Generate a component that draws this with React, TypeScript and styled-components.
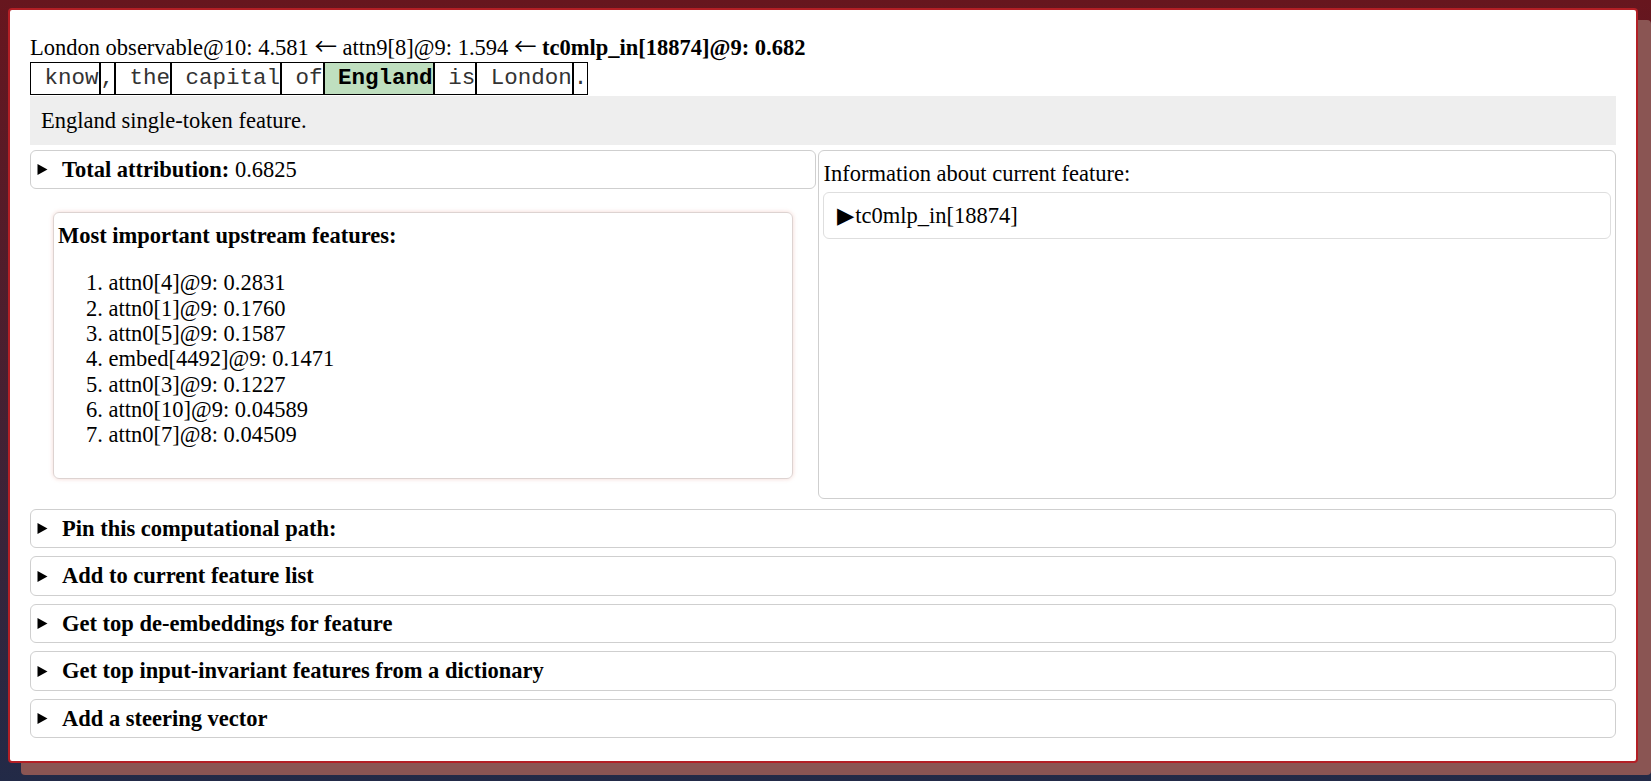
import React from "react";
import styled, { createGlobalStyle } from "styled-components";

const GlobalStyle = createGlobalStyle`
  html, body { margin: 0; padding: 0; }
  html {
    min-height: 100%;
    background: linear-gradient(180deg, #67161e 0%, #4a1f2f 45%, #222a47 100%);
  }
  body {
    min-height: 100vh;
    font-family: "Liberation Serif", "Times New Roman", serif;
    font-size: 22.5px;
    line-height: 25.3px;
    color: #000;
  }
`;

const Page = styled.div`
  padding: 8px 13px 18px 8px;
`;

const Card = styled.main`
  background: #fff;
  border: 2px solid #b31f25;
  border-radius: 4px;
  box-shadow: 13px 12px 0 #8a5553;
  padding: 25px 20px 23px;
  display: flex;
  flex-direction: column;
`;

const Title = styled.div`
  white-space: nowrap;
  height: 25.3px;
`;

const Arrow = styled.span`
  font-family: "Noto Sans CJK SC", "DejaVu Sans", sans-serif;
  font-weight: 400;
  font-size: 22.5px;
  line-height: 0;
`;

const TokenRow = styled.div`
  display: flex;
  margin-top: 1.4px;
`;

const Token = styled.span<{ $active?: boolean }>`
  font-family: "Liberation Mono", "Courier New", monospace;
  font-size: 22.5px;
  line-height: 25.5px;
  white-space: pre;
  padding: 3px 0;
  border: 1px solid #000;
  color: ${(p) => (p.$active ? "#000" : "#333")};
  font-weight: ${(p) => (p.$active ? 700 : 400)};
  background: ${(p) => (p.$active ? "#bfdfbf" : "#fff")};
`;

const Description = styled.div`
  margin-top: 1px;
  background: #eeeeee;
  padding: 12px 11px;
`;

const Columns = styled.div`
  margin-top: 4.3px;
  display: grid;
  grid-template-columns: 786px 1fr;
  column-gap: 2px;
  align-items: stretch;
`;

const LeftColumn = styled.div`
  display: flex;
  flex-direction: column;
`;

const Panel = styled.div`
  border: 1px solid #cfcfcf;
  border-radius: 6px;
  background: #fff;
`;

const Summary = styled(Panel)`
  display: flex;
  align-items: center;
  padding: 6px 6px;
`;

const Marker = styled.svg`
  flex: none;
  width: 11px;
  height: 13px;
  margin: 1px 14px 0 0;
`;

const Bold = styled.b`
  font-weight: 700;
`;

const Upstream = styled.section`
  margin: 23px 23px 20px;
  border: 1px solid #ddd3d1;
  border-radius: 6px;
  box-shadow: 0 0 4px rgba(214, 110, 90, 0.28);
  padding: 10px 4px 9px;
`;

const UpstreamList = styled.ol`
  margin: 22px 0;
  padding-left: 50.5px;
`;

const InfoPanel = styled(Panel)`
  padding: 10px 4px;
`;

const InfoHeading = styled.div`
  padding-left: 0.5px;
  margin-bottom: 6px;
`;

const InfoItem = styled.div`
  border: 1px solid #dedede;
  border-radius: 6px;
  padding: 10px 13px;
  display: flex;
  align-items: center;
`;

const BigArrow = styled.span`
  font-family: "DejaVu Sans", sans-serif;
  font-size: 22.5px;
  margin-right: 1px;
`;

const Stack = styled.div`
  margin-top: 9.3px;
  display: flex;
  flex-direction: column;
  gap: 8.2px;
`;

const Triangle = () => (
  <Marker viewBox="0 0 11 13">
    <path d="M0.5 1 L10.5 6.5 L0.5 12 Z" fill="#000" />
  </Marker>
);

const tokens = [" know", ",", " the", " capital", " of", " England", " is", " London", "."];

const upstream = [
  "attn0[4]@9: 0.2831",
  "attn0[1]@9: 0.1760",
  "attn0[5]@9: 0.1587",
  "embed[4492]@9: 0.1471",
  "attn0[3]@9: 0.1227",
  "attn0[10]@9: 0.04589",
  "attn0[7]@8: 0.04509",
];

const actions = [
  "Pin this computational path:",
  "Add to current feature list",
  "Get top de-embeddings for feature",
  "Get top input-invariant features from a dictionary",
  "Add a steering vector",
];

export default function App() {
  return (
    <>
      <GlobalStyle />
      <Page>
        <Card>
          <Title>
            London observable@10: 4.581 <Arrow>←</Arrow> attn9[8]@9: 1.594 <Arrow>←</Arrow>{" "}
            <Bold>tc0mlp_in[18874]@9: 0.682</Bold>
          </Title>
          <TokenRow>
            {tokens.map((t, i) => (
              <Token key={i} $active={t === " England"}>
                {t}
              </Token>
            ))}
          </TokenRow>
          <Description>England single-token feature.</Description>
          <Columns>
            <LeftColumn>
              <Summary>
                <Triangle />
                <span>
                  <Bold>Total attribution:</Bold> 0.6825
                </span>
              </Summary>
              <Upstream>
                <Bold>Most important upstream features:</Bold>
                <UpstreamList>
                  {upstream.map((u) => (
                    <li key={u}>{u}</li>
                  ))}
                </UpstreamList>
              </Upstream>
            </LeftColumn>
            <InfoPanel>
              <InfoHeading>Information about current feature:</InfoHeading>
              <InfoItem>
                <BigArrow>▶</BigArrow>
                <span>tc0mlp_in[18874]</span>
              </InfoItem>
            </InfoPanel>
          </Columns>
          <Stack>
            {actions.map((a) => (
              <Summary key={a}>
                <Triangle />
                <Bold>{a}</Bold>
              </Summary>
            ))}
          </Stack>
        </Card>
      </Page>
    </>
  );
}
